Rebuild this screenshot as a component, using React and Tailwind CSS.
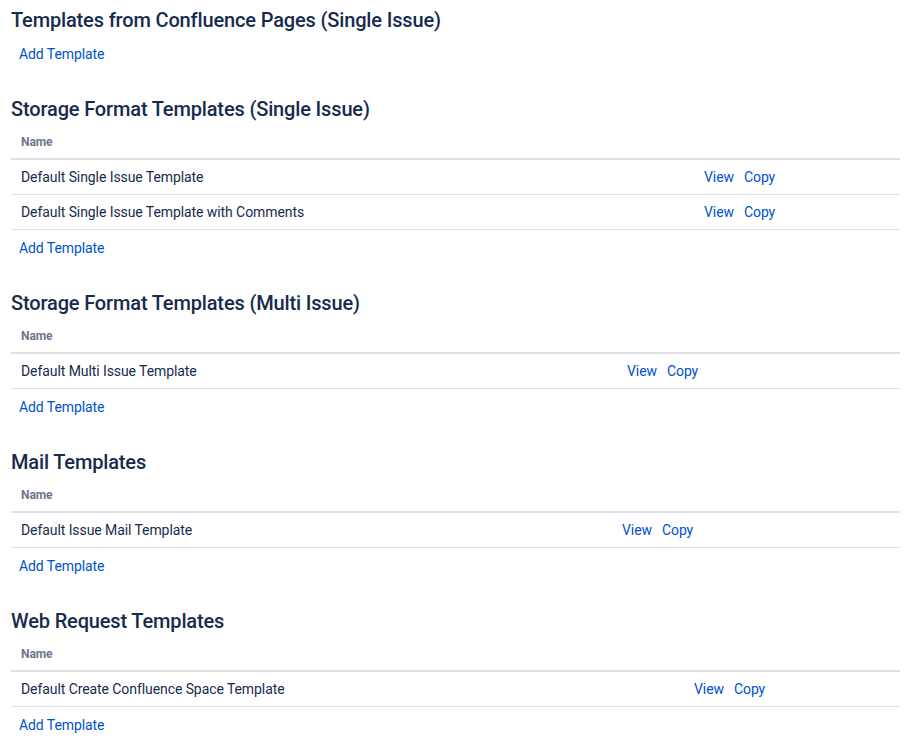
import React from "react";

const sections = [
  { title: "Templates from Confluence Pages (Single Issue)", rows: null },
  {
    title: "Storage Format Templates (Single Issue)",
    col: "w-[683px]",
    rows: ["Default Single Issue Template", "Default Single Issue Template with Comments"],
  },
  { title: "Storage Format Templates (Multi Issue)", col: "w-[606px]", rows: ["Default Multi Issue Template"] },
  { title: "Mail Templates", col: "w-[601px]", rows: ["Default Issue Mail Template"] },
  { title: "Web Request Templates", col: "w-[673px]", rows: ["Default Create Confluence Space Template"] },
];

function Link({ children, className = "" }) {
  return (
    <a href="#" className={`text-[#0052cc] no-underline ${className}`}>
      {children}
    </a>
  );
}

export default function App() {
  return (
    <div
      className="bg-white pl-[11px] pr-[14px] pt-[8px] pb-[10px] text-[14px] leading-[20px] tracking-[-0.08px] text-[#172b4d]"
      style={{ fontFamily: "Roboto, 'Noto Sans', sans-serif" }}
    >
      {sections.map((s, i) => (
        <section key={i} className={i === 0 ? "" : "mt-[33px]"}>
          <h2 className="text-[20px] leading-[24px] font-medium tracking-[-0.15px] text-[#172b4d]">{s.title}</h2>
          {s.rows ? (
            <table className="mt-[5px] w-full border-collapse table-fixed">
              <thead>
                <tr className="border-b-2 border-[#dfe1e6]">
                  <th className={`${s.col} text-left px-[10px] py-[7px] text-[12px] leading-[18px] font-bold text-[#6b778c]`}>
                    Name
                  </th>
                  <th></th>
                </tr>
              </thead>
              <tbody>
                {s.rows.map((r) => (
                  <tr key={r} className="border-b border-[#dfe1e6]">
                    <td className="px-[10px] py-[7px]">{r}</td>
                    <td className="px-[10px] py-[7px] whitespace-nowrap">
                      <Link>View</Link>
                      <Link className="ml-[10px]">Copy</Link>
                    </td>
                  </tr>
                ))}
              </tbody>
            </table>
          ) : null}
          <div className={s.rows ? "mt-[8px] pl-[8px]" : "mt-[12px] pl-[8px]"}>
            <Link>Add Template</Link>
          </div>
        </section>
      ))}
    </div>
  );
}
